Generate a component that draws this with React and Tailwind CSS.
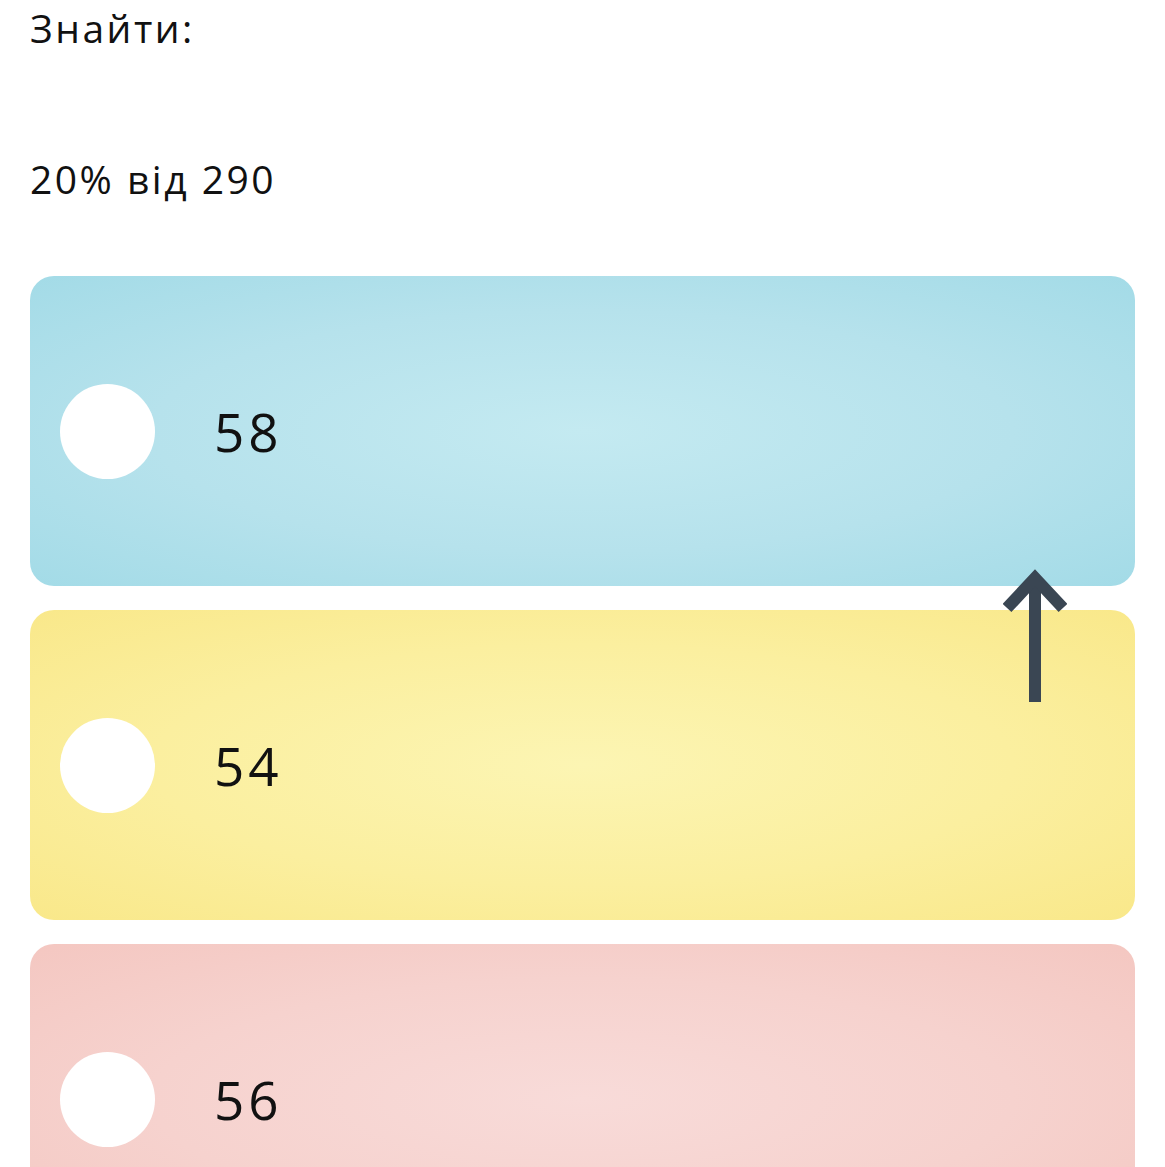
const options = [
  { value: '58', bg: 'bg-[radial-gradient(ellipse_at_center,#c4eaf1_0%,#b6e2ec_55%,#a3dbe7_100%)]' },
  { value: '54', bg: 'bg-[radial-gradient(ellipse_at_center,#fcf5b3_0%,#fbef9f_55%,#f9e88a_100%)]' },
  { value: '56', bg: 'bg-[radial-gradient(ellipse_at_center,#f8dbd9_0%,#f6d2ce_55%,#f4c7c1_100%)]' },
];

const UpArrow = () => (
  <svg width="64" height="136" viewBox="0 0 64 136" fill="none">
    <path d="M32 12 V134" stroke="#3a4653" strokeWidth="12" />
    <path d="M4 40 L32 10 L60 40" stroke="#3a4653" strokeWidth="12" strokeLinejoin="miter" />
  </svg>
);

const App = () => {
  return (
    <div className="min-h-screen bg-white px-[30px] text-[#111] font-['Open_Sans',sans-serif] overflow-hidden h-[1167px]">
      <p className="text-[39px] leading-none pt-[8px] tracking-[2.5px]">Знайти:</p>
      <p className="text-[39px] leading-none mt-[112px] tracking-[2.5px]">20% від 290</p>

      <div className="relative mt-[78px] flex flex-col gap-6">
        {options.map((o) => (
          <div
            key={o.value}
            className={`h-[310px] shrink-0 rounded-[24px] flex items-center ${o.bg}`}
          >
            <div className="ml-[30px] w-[95px] h-[95px] rounded-full bg-white" />
            <span className="ml-[59px] text-[53px] leading-none tracking-[4px]">{o.value}</span>
          </div>
        ))}
        <div className="absolute left-[973px] top-[292px]">
          <UpArrow />
        </div>
      </div>
    </div>
  );
};

export default App;
